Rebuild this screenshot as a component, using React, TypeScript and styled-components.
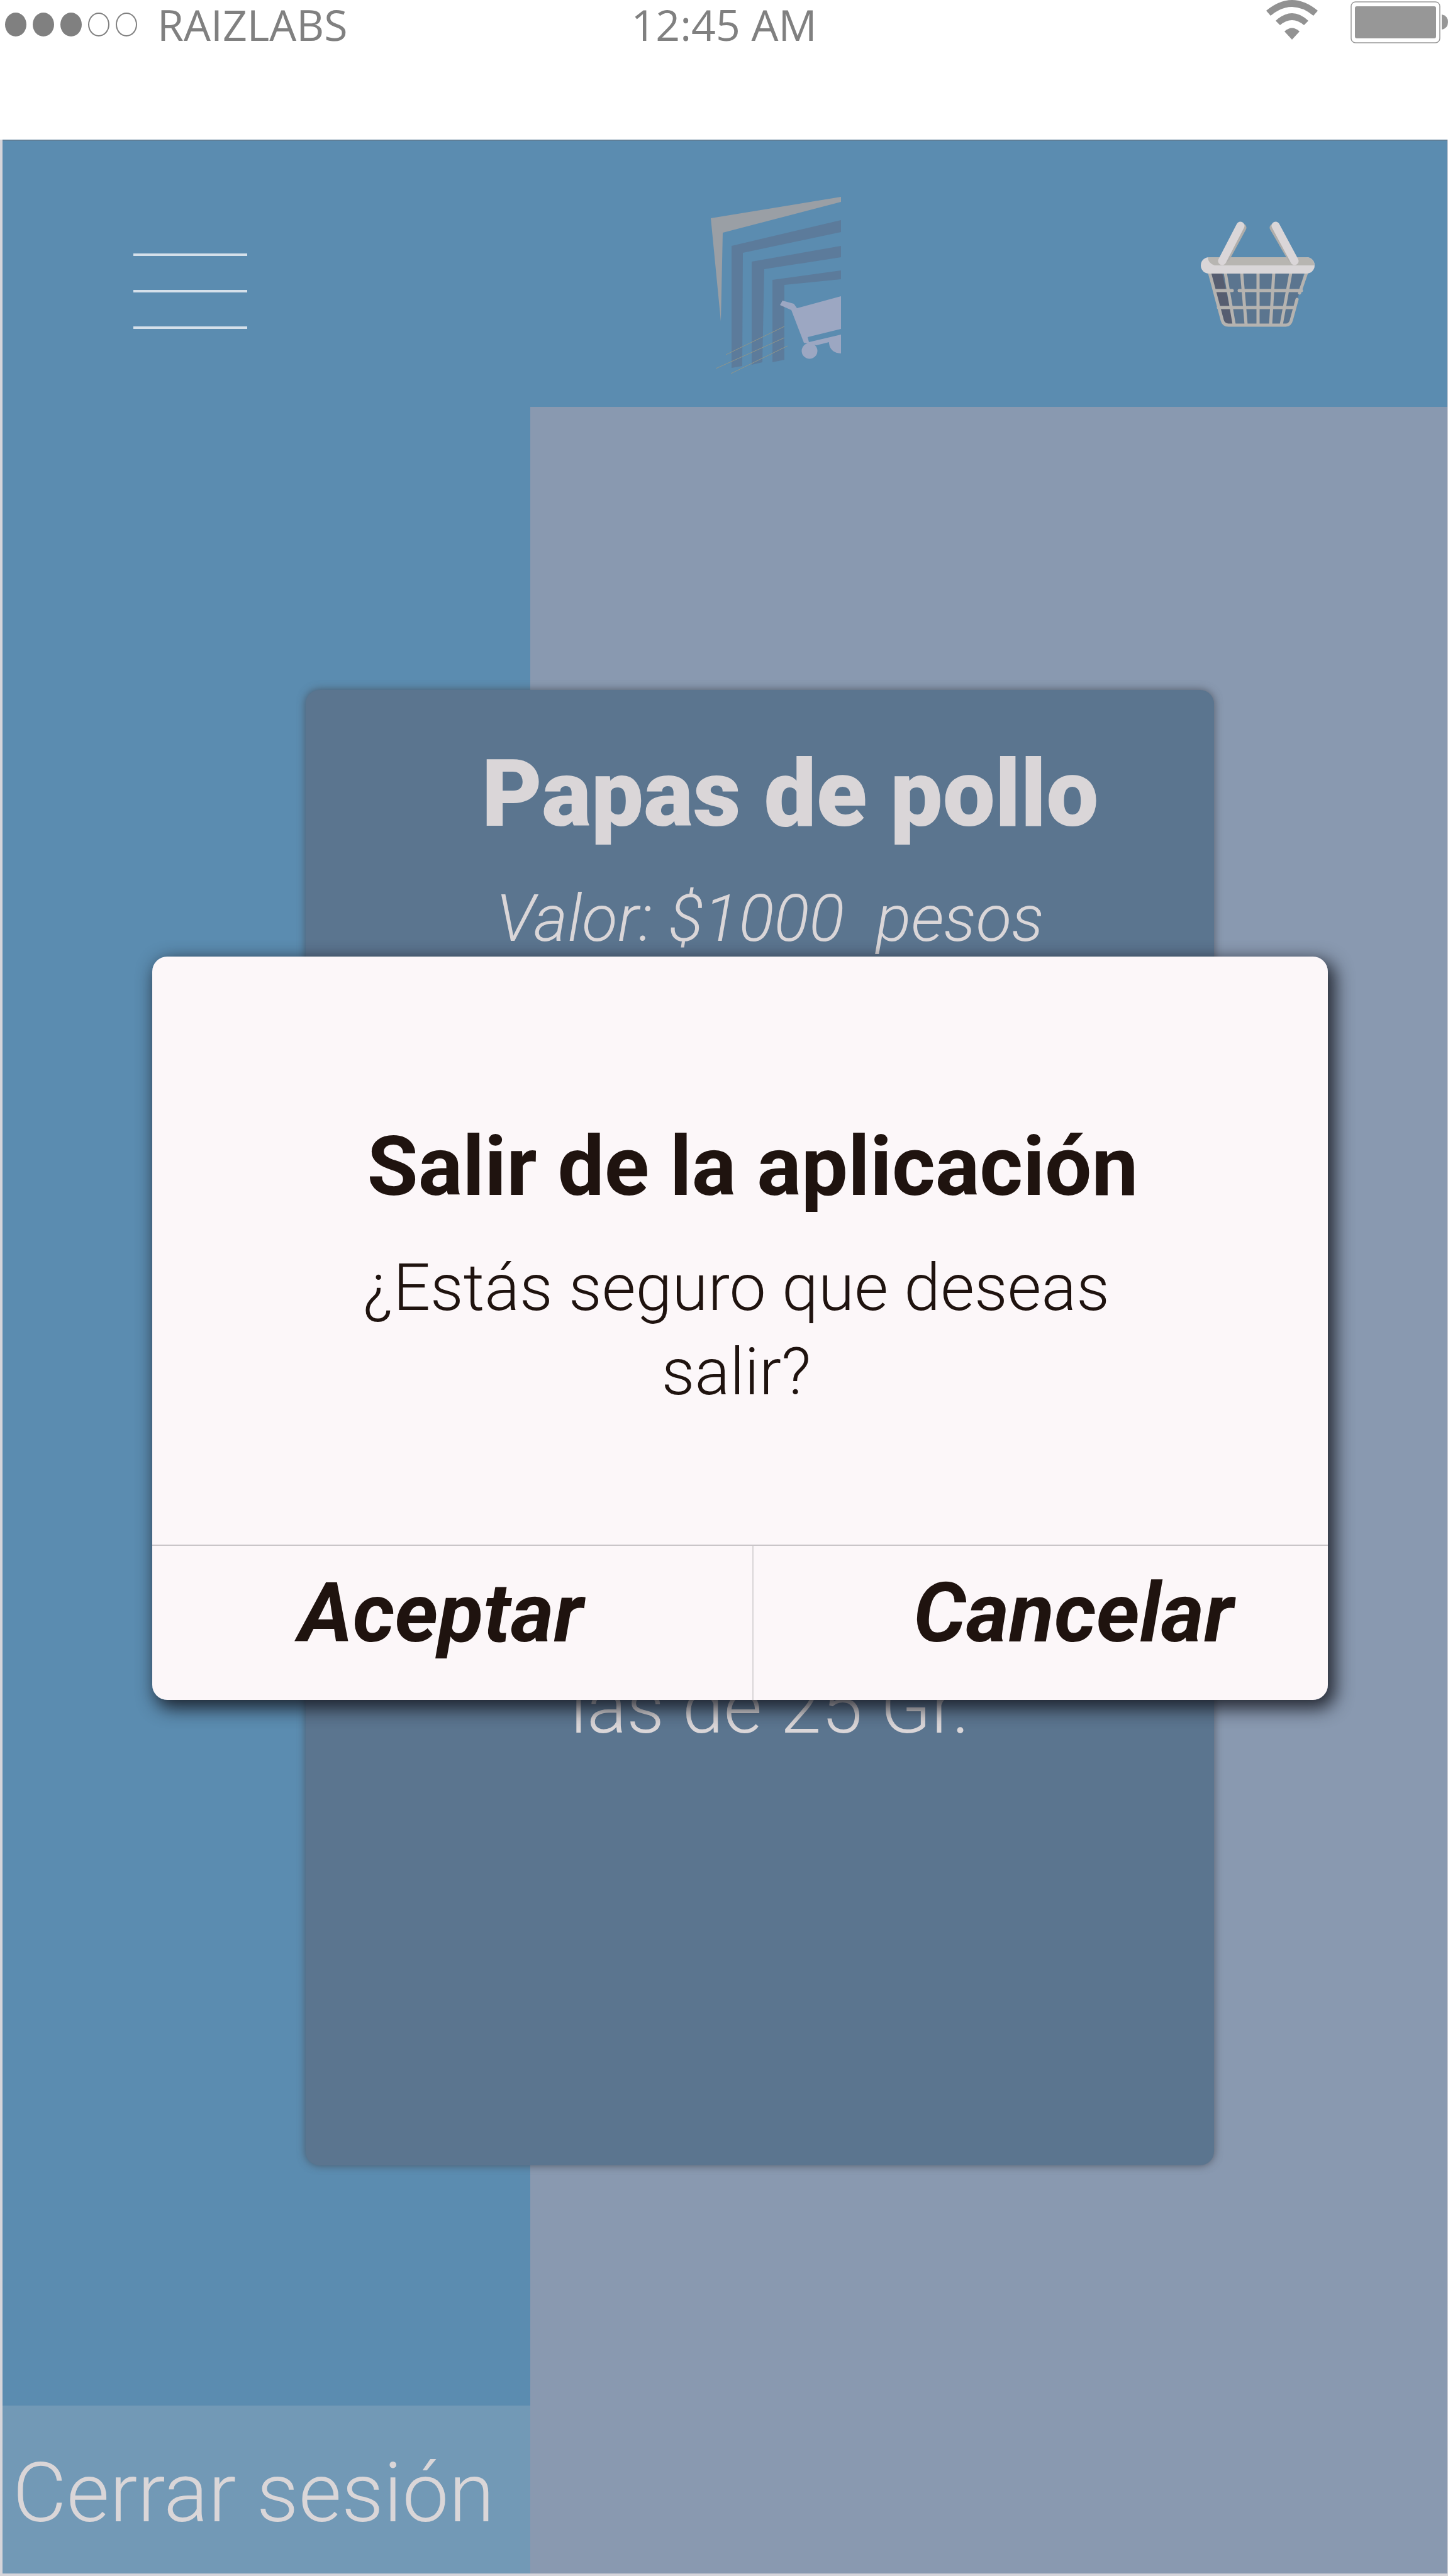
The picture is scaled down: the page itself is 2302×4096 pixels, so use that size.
import React from "react";
import styled, { createGlobalStyle } from "styled-components";

const ink = "#1f130f";
const pale = "#dad6d8";
const blue = "#5b8cb0";

const GlobalStyle = createGlobalStyle`
  *, *::before, *::after { box-sizing: border-box; }
  body { margin: 0; background: #fff; font-family: Roboto, "Liberation Sans", sans-serif; }
  h1, h2, p { margin: 0; font-weight: inherit; }
  button { border: 0; padding: 0; background: none; font: inherit; color: inherit; cursor: pointer; }
`;

const Phone = styled.div`
  position: relative;
  min-height: 100vh;
  display: flex;
  flex-direction: column;
`;

const StatusBar = styled.header`
  height: 222px;
  display: grid;
  grid-template-columns: 1fr auto 1fr;
  align-items: start;
  color: #808080;
  font: 400 68px/78px "Open Sans", "Noto Sans", sans-serif;
`;

const Carrier = styled.div`
  display: flex;
  align-items: center;
  padding-left: 8px;
`;

const Signal = styled.span`
  display: flex;
  gap: 10px;
  margin-right: 32px;
`;

const Dot = styled.span<{ $on: boolean }>`
  width: 34px;
  height: 38px;
  border-radius: 50%;
  border: 2px solid #808080;
  background: ${(p) => (p.$on ? "#808080" : "transparent")};
`;

const Indicators = styled.div`
  display: flex;
  justify-content: flex-end;
  gap: 52px;

  svg { display: block; }
`;

const Screen = styled.div`
  flex: 1;
  display: flex;
  flex-direction: column;
  background: #8999b0;
  border: solid #d6d5da;
  border-width: 0 1px 4px 4px;
`;

const AppBar = styled.nav`
  height: 425px;
  padding: 0 210px 0 208px;
  display: grid;
  grid-template-columns: 918fr 212px 749fr;
  align-items: start;
  background: ${blue};
  border-top: 2px solid #5f7f98;
`;

const MenuButton = styled.button`
  justify-self: start;
  width: 181px;
  display: grid;
  gap: 54px;
  margin-top: 171px;
  padding: 8px 0;
`;

const MenuLine = styled.span`
  height: 4px;
  background: #d5e0ea;
`;

const Brand = styled.div`
  margin-top: 88px;
  svg { display: block; }
`;

const BasketButton = styled.button`
  justify-self: end;
  margin-top: 128px;
  svg { display: block; }
`;

const Body = styled.div`
  flex: 1;
  display: grid;
  grid-template-columns: 839fr 1458fr;
`;

const Drawer = styled.aside`
  display: flex;
  flex-direction: column;
  justify-content: flex-end;
  background: ${blue};
`;

const LogoutButton = styled.button`
  height: 267px;
  padding: 10px 16px 0;
  text-align: left;
  white-space: nowrap;
  background: #7299b6;
  color: ${pale};
  font-size: 132px;
  font-weight: 300;
`;

const Layer = styled.div<{ $columns: string; $top: number }>`
  position: absolute;
  inset: 0;
  padding-top: ${(p) => p.$top}px;
  display: grid;
  grid-template-columns: ${(p) => p.$columns};
  align-items: start;

  > * { grid-column: 2; }
`;

const Card = styled.article`
  min-height: 2346px;
  padding: 76px 0 0 32px;
  display: flex;
  flex-direction: column;
  align-items: center;
  border-radius: 22px;
  background: #5b758f;
  color: ${pale};
  box-shadow: 0 0 14px rgba(70, 75, 85, 0.8);
  text-align: center;
`;

const ProductName = styled.h2`
  font-size: 148px;
  line-height: 180px;
  font-weight: 900;
  padding-left: 64px;
`;

const Price = styled.p`
  margin-top: 8px;
  font-size: 104px;
  line-height: 200px;
  font-weight: 300;
  font-style: italic;
  white-space: pre;
`;

const Weight = styled.p`
  margin-top: 1054px;
  font-size: 118px;
  line-height: 200px;
  font-weight: 300;
`;

const Dialog = styled.section`
  overflow: hidden;
  border-radius: 24px;
  background: #fcf7f9;
  color: ${ink};
`;

const DialogShadow = styled.div`
  border-radius: 24px;
  box-shadow: 8px 10px 28px 4px rgba(20, 22, 30, 0.85);
`;

const Message = styled.div`
  height: 935px;
  padding-top: 244px;
  text-align: center;
`;

const Question = styled.h1`
  font-size: 132px;
  line-height: 180px;
  font-weight: 700;
  padding-left: 40px;
`;

const Detail = styled.p`
  padding: 0 312px 0 300px;
  margin-top: 36px;
  font-size: 104px;
  line-height: 134px;
  font-weight: 300;
`;

const Actions = styled.div`
  display: grid;
  grid-template-columns: 954fr 915fr;
  border-top: 2px solid #c9c5c8;
`;

const Action = styled.button`
  height: 245px;
  padding: 0 36px 32px 0;
  font-size: 132px;
  font-weight: 700;
  font-style: italic;

  & + & {
    border-left: 2px solid #d9d5d8;
    padding: 0 0 32px 104px;
  }
`;

const WifiIcon = () => (
  <svg width="82" height="64" viewBox="0 0 82 64" fill="#929292" aria-hidden="true">
    <path d="M0 17Q41-17 82 17L75 25Q41-3 7 25Z" />
    <path d="M15 33Q41 9 67 33L60 40Q41 24 22 40Z" />
    <path d="M29 50Q41 39 53 50L41 63Z" />
  </svg>
);

const BatteryIcon = () => (
  <svg width="155" height="70" viewBox="0 0 155 70" aria-hidden="true">
    <rect x="1" y="3" width="141" height="65" rx="7" fill="none" stroke="#999" strokeWidth="1.5" />
    <rect x="7" y="10" width="129" height="51" rx="3" fill="#979797" />
    <path d="M145 23Q155 25 155 35Q155 45 145 47Z" fill="#979797" />
  </svg>
);

const StoreLogo = () => (
  <svg width="212" height="290" viewBox="0 0 212 290" role="img" aria-label="Logo">
    <path d="M0 35L207 1V9L19 58L16 199Z" fill="#9a9fa5" />
    <g fill="#5c7b9b">
      <path d="M33 79L207 38V57L51 90L50 270L33 273Z" />
      <path d="M65 104L207 79V97L85 116L82 264L65 268Z" />
      <path d="M98 133L207 118V132L117 141V260L98 264Z" />
    </g>
    <path d="M24 252L117 207M8 274L117 225M32 282L122 238" stroke="#90968a" strokeWidth="1" />
    <path
      d="M114 166L132 171L137 178L207 159V211L154 224L156 232L207 220V250Q190 249 188 234L188 232L168 237L148 233L128 181L110 173Z"
      fill="#9ca7c2"
    />
    <circle cx="157" cy="246" r="12.5" fill="#9ca7c2" />
  </svg>
);

const BasketIcon = () => (
  <svg width="182" height="170" viewBox="0 0 182 170" fill="none" aria-hidden="true">
    <path d="M16 82H164L144 164H38Z" fill="#5b758f" />
    <path d="M16 82H34L52 164H38Z" fill="#565d70" />
    <g stroke="#b5b3b0" strokeWidth="5" strokeLinecap="round">
      <path d="M14 82L34 157Q36 165 44 165H135Q142 165 144 157L153 124M157 114L168 82" />
      <path d="M39 82L53 164M65 82L72 164M91 82V164M116 82L111 164M143 82L128 164" />
      <path d="M22 110H50M61 110H160M28 137H149" />
    </g>
    <rect x="0" y="57" width="181" height="26" rx="13" fill="#d9d6d8" />
    <path d="M11 57H168Q179 57 181 70H22Q12 67 11 57Z" fill="#b7b5b1" />
    <g strokeLinecap="round" strokeWidth="13">
      <path d="M66 10L40 58M116 10L144 58" stroke="#b0aeab" />
      <path d="M63 7L34 63M119 7L149 63" stroke="#dad6d8" />
    </g>
  </svg>
);

export default function App() {
  return (
    <Phone>
      <GlobalStyle />
      <StatusBar>
        <Carrier>
          <Signal>
            {[true, true, true, false, false].map((on, i) => (
              <Dot key={i} $on={on} />
            ))}
          </Signal>
          RAIZLABS
        </Carrier>
        <span>12:45 AM</span>
        <Indicators>
          <WifiIcon />
          <BatteryIcon />
        </Indicators>
      </StatusBar>

      <Screen>
        <AppBar>
          <MenuButton aria-label="Menú">
            <MenuLine />
            <MenuLine />
            <MenuLine />
          </MenuButton>
          <Brand>
            <StoreLogo />
          </Brand>
          <BasketButton aria-label="Carrito">
            <BasketIcon />
          </BasketButton>
        </AppBar>
        <Body>
          <Drawer>
            <LogoutButton>Cerrar sesión</LogoutButton>
          </Drawer>
        </Body>
      </Screen>

      <Layer $columns="486fr 1444fr 372fr" $top={1097}>
        <Card>
          <ProductName>Papas de pollo</ProductName>
          <Price>{"Valor: $1000  pesos"}</Price>
          <Weight>las de 25 Gr.</Weight>
        </Card>
      </Layer>

      <Layer $columns="242fr 1869fr 191fr" $top={1521}>
        <DialogShadow>
          <Dialog role="dialog" aria-labelledby="exit-title">
            <Message>
              <Question id="exit-title">Salir de la aplicación</Question>
              <Detail>¿Estás seguro que deseas salir?</Detail>
            </Message>
            <Actions>
              <Action>Aceptar</Action>
              <Action>Cancelar</Action>
            </Actions>
          </Dialog>
        </DialogShadow>
      </Layer>
    </Phone>
  );
}
